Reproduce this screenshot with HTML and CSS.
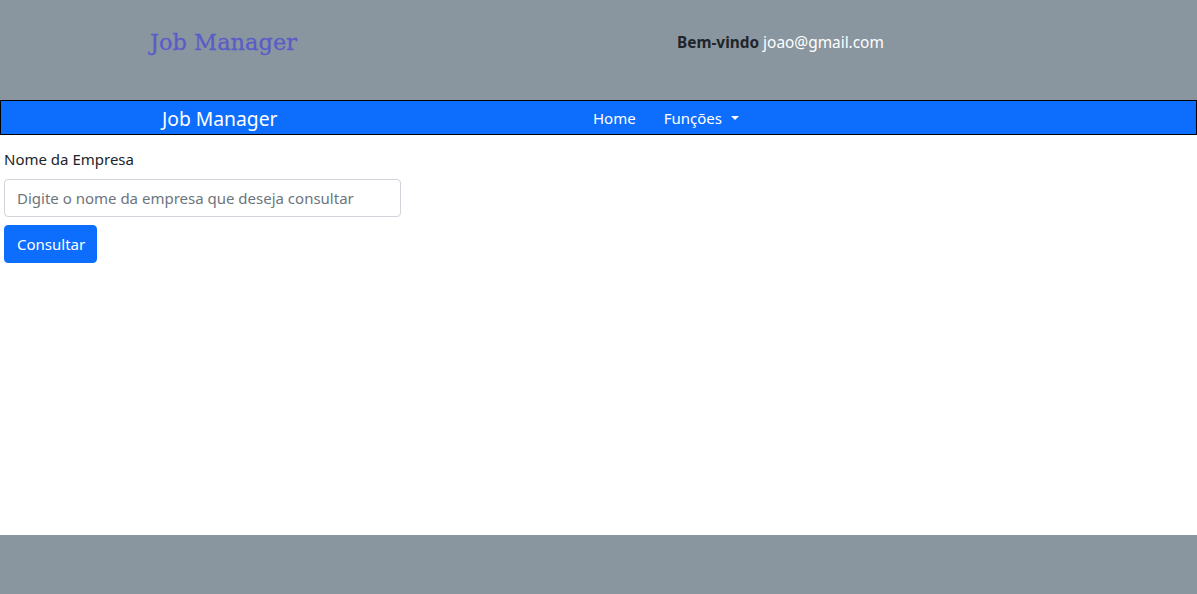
FILE: index.html
```html
<!DOCTYPE html>
<html lang="pt-BR">
<head>
<meta charset="utf-8">
<title>Job Manager</title>
<link rel="stylesheet" href="styles.css">
</head>
<body>
<div class="page">
  <header class="top">
    <h1 class="logo">Job Manager</h1>
    <div class="welcome"><b>Bem-vindo</b> <span class="email">joao@gmail.com</span></div>
  </header>
  <nav class="navbar">
    <span class="brand">Job Manager</span>
    <div class="links">
      <a class="link">Home</a>
      <a class="link dropdown">Funções <span class="caret"></span></a>
    </div>
  </nav>
  <main class="content">
    <label class="label">Nome da Empresa</label>
    <input class="input" type="text" placeholder="Digite o nome da empresa que deseja consultar">
    <button class="btn">Consultar</button>
  </main>
  <footer class="foot"></footer>
</div>
</body>
</html>
```
FILE: styles.css
```css
* { box-sizing: border-box; }
html, body { margin: 0; padding: 0; }
body {
  font-family: "Noto Sans", "Open Sans", sans-serif;
  font-size: 16px;
  color: #212529;
  background: #fff;
}
.page { display: flex; flex-direction: column; height: 594px; }
.top {
  height: 100px;
  background: #8996a0;
  display: flex;
  align-items: center;
  padding-left: 150px;
  padding-bottom: 17px;
}
.logo {
  margin: 0;
  font-family: "DejaVu Serif", serif;
  font-weight: normal;
  font-size: 22.5px;
  color: #5a5cc8;
  width: 527px;
  -webkit-text-stroke: 0.3px #5a5cc8;
}
.welcome { font-size: 15.4px; color: #212529; padding-top: 1px; }
.welcome b { font-weight: 700; }
.email { color: #fff; }
.navbar {
  height: 35px;
  background: #0d6efd;
  border: 1px solid #000;
  display: flex;
  align-items: center;
  padding-left: 161px;
  color: #fff;
}
.brand { font-size: 19.3px; width: 431px; padding-top: 1px; }
.links { display: flex; gap: 28px; font-size: 15px; }
.link { color: #fff; display: flex; align-items: center; }
.caret {
  display: inline-block;
  margin-left: 9px;
  border-top: 4px solid #fff;
  border-left: 4px solid transparent;
  border-right: 4px solid transparent;
}
.content {
  flex: 1;
  padding: 15px 4px 0;
  display: flex;
  flex-direction: column;
  align-items: flex-start;
}
.label { font-size: 15px; margin-bottom: 11px; line-height: 18px; }
.input {
  width: 397px;
  height: 38px;
  border: 1px solid #ced4da;
  border-radius: 4px;
  padding: 6px 12px;
  font-family: inherit;
  font-size: 15px;
  color: #212529;
  margin-bottom: 8px;
}
.input::placeholder { color: #6c757d; }
.btn {
  height: 38px;
  width: 93px;
  background: #0d6efd;
  color: #fff;
  border: 1px solid #0d6efd;
  border-radius: 4px;
  font-family: inherit;
  font-size: 15px;
  padding: 6px 12px;
}
.foot { height: 59px; background: #8996a0; }
```
